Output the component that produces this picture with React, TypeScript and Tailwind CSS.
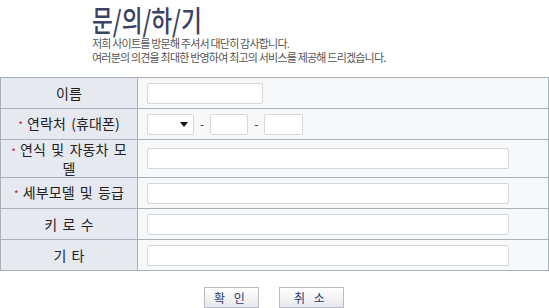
import React from "react";

const font = { fontFamily: "'Noto Sans CJK KR', 'Noto Sans', sans-serif" };

function Star() {
	return <span className="text-[#c0243a] text-[10px] mr-[4px] align-middle">*</span>;
}

function Row({ label, star, h, children }: { label: React.ReactNode; star?: boolean; h: string; children: React.ReactNode }) {
	return (
		<tr className={h}>
			<td className="w-[137px] bg-[#e6e9f0] border border-[#aab0b8] text-center text-[14px] leading-[16px] tracking-[0.1px] [word-spacing:2px] text-[#222] px-1">
				{star && <Star />}
				{label}
			</td>
			<td className="bg-[#f7f8fa] border border-[#aab0b8] pl-[9px]">{children}</td>
		</tr>
	);
}

const inputCls = "h-[21px] bg-white border border-[#d4d6da] rounded-[2px] block";

export default function App() {
	return (
		<div className="w-[549px] h-[308px] bg-white overflow-hidden" style={font}>
			<div className="pl-[92px] pt-[2px] h-[77px]">
				<div className="h-[34px] overflow-visible">
					<h1 className="inline-block text-[29px] leading-[34px] font-medium text-[#3b4262] origin-left scale-x-[0.78] whitespace-nowrap">문/의/하/기</h1>
				</div>
				<p className="text-[11px] leading-[14px] text-[#555] tracking-[-0.8px]">저희 사이트를 방문해 주셔서 대단히 감사합니다.</p>
				<p className="text-[11px] leading-[14px] text-[#555] tracking-[-0.8px]">여러분의 의견을 최대한 반영하여 최고의 서비스를 제공해 드리겠습니다.</p>
			</div>
			<table className="w-[549px] border-collapse">
				<tbody>
					<Row label="이름" h="h-[31px]">
						<div className={`${inputCls} w-[116px]`} />
					</Row>
					<Row label="연락처 (휴대폰)" star h="h-[31px]">
						<div className="flex items-center">
							<div className={`${inputCls} w-[47px] flex items-center justify-end pr-[5px]`}>
								<svg width="8" height="5" viewBox="0 0 8 5"><path d="M0 0h8L4 5z" fill="#111" /></svg>
							</div>
							<span className="mx-[6px] text-[12px] text-[#333]">-</span>
							<div className={`${inputCls} w-[38px]`} />
							<span className="mx-[6px] text-[12px] text-[#333]">-</span>
							<div className={`${inputCls} w-[39px]`} />
						</div>
					</Row>
					<Row label={<>연식 및 자동차 모<br />델</>} star h="h-[38px]">
						<div className={`${inputCls} w-[362px]`} />
					</Row>
					<Row label="세부모델 및 등급" star h="h-[31px]">
						<div className={`${inputCls} w-[362px]`} />
					</Row>
					<Row label="키 로 수" h="h-[31px]">
						<div className={`${inputCls} w-[362px]`} />
					</Row>
					<Row label="기 타" h="h-[31px]">
						<div className={`${inputCls} w-[362px]`} />
					</Row>
				</tbody>
			</table>
			<div className="flex justify-center gap-[20px] pt-[16px] pr-[2px]">
				<button className="w-[55px] h-[21px] border border-[#b9bcc2] bg-gradient-to-b from-[#ffffff] to-[#e8e9ec] text-[12px] text-[#2c3a70] tracking-[3px]">확 인</button>
				<button className="w-[65px] h-[21px] border border-[#b9bcc2] bg-gradient-to-b from-[#ffffff] to-[#e8e9ec] text-[12px] text-[#2c3a70] tracking-[3px]">취 소</button>
			</div>
		</div>
	);
}
